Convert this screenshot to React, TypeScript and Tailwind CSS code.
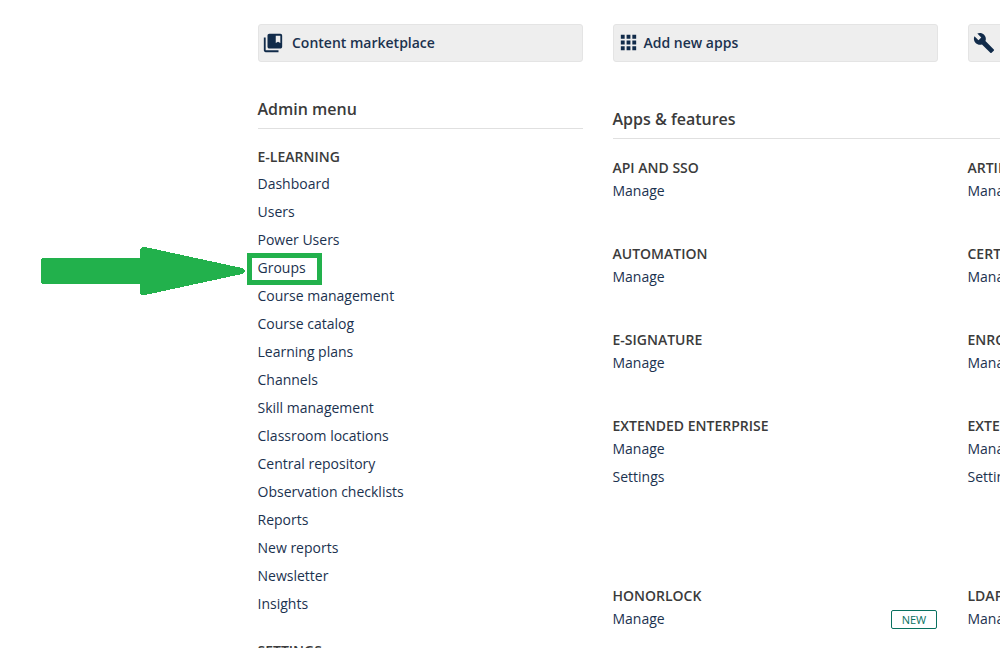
import { MdCollectionsBookmark, MdApps, MdBuild } from "react-icons/md";

const menu = ["Dashboard", "Users", "Power Users", "Groups", "Course management", "Course catalog", "Learning plans", "Channels", "Skill management", "Classroom locations", "Central repository", "Observation checklists", "Reports", "New reports", "Newsletter", "Insights"];

function Group({ title, items = ["Manage"], height = "h-[86px]", badge = false }: { title: string; items?: string[]; height?: string; badge?: boolean }) {
  return (
    <section className={`w-[325px] ${height}`}>
      <h3 className="h-[22px] font-semibold leading-[22px] text-[#3b3b3b]">{title}</h3>
      {items.map((item) => (
        <div key={item} className="flex h-7 items-center justify-between">
          <a className="-mt-1">{item}</a>
          {badge && <span className="-mt-[3px] mr-px flex h-[19px] w-[46px] items-center justify-center rounded-[2px] border border-[#08705f] pl-px pt-px text-[11px] text-[#08705f]">NEW</span>}
        </div>
      ))}
    </section>
  );
}

export default function App() {
  return (
    <div className="w-[1003px] bg-white">
      <div className="relative h-[648px] w-[1000px] overflow-hidden bg-white pl-[257.5px] pt-6 font-['Open_Sans',sans-serif] text-sm text-[#1b324f]">
        <div className="flex w-[1100px] gap-[30px] font-semibold">
          <div className="flex h-[38px] w-[325px] items-center gap-2 rounded-[3px] border border-[#e4e4e4] bg-[#eee] pl-[3.5px]"><MdCollectionsBookmark size={22} className="-mt-px text-[#112b4a]" />Content marketplace</div>
          <div className="flex h-[38px] w-[325px] items-center gap-[3.5px] rounded-[3px] border border-[#e4e4e4] bg-[#eee] pl-[3.5px]"><MdApps size={23} className="-mt-px text-[#112b4a]" />Add new apps</div>
          <div className="flex h-[38px] w-[325px] items-center rounded-[3px] border border-[#e4e4e4] bg-[#eee] pl-1"><MdBuild size={22} className="-mt-px text-[#112b4a]" /></div>
        </div>
        <div className="flex w-[1100px] gap-[30px]">
          <div className="w-[325px] shrink-0 pt-[33px]">
            <h2 className="h-[34px] border-b border-[#e0e0e0] text-base font-semibold leading-7 text-[#3b3b3b]">Admin menu</h2>
            <h3 className="mt-[17px] h-6 font-semibold leading-[22px] text-[#3b3b3b]">E-LEARNING</h3>
            <nav>{menu.map((item) => <a key={item} className="block h-7 leading-7">{item}</a>)}</nav>
            <h3 className="mt-[22px] font-semibold leading-[22px] text-[#3b3b3b]">SETTINGS</h3>
          </div>
          <div className="w-[680px] shrink-0 pt-[43px]">
            <h2 className="h-[34px] border-b border-[#e0e0e0] text-base font-semibold leading-7 text-[#3b3b3b]">Apps &amp; features</h2>
            <div className="grid grid-cols-2 gap-x-[30px] pt-[18px]">
              <Group title="API AND SSO" /><Group title="ARTIFICIAL INTELLIGENCE" />
              <Group title="AUTOMATION" /><Group title="CERTIFICATIONS" />
              <Group title="E-SIGNATURE" /><Group title="ENROLLMENT" />
              <Group title="EXTENDED ENTERPRISE" items={["Manage", "Settings"]} height="h-[170px]" /><Group title="EXTERNAL TRAINING" items={["Manage", "Settings"]} height="h-[170px]" />
              <Group title="HONORLOCK" badge /><Group title="LDAP" />
            </div>
          </div>
        </div>
        <svg className="absolute left-0 top-[240px]" width="330" height="65" shapeRendering="crispEdges">
          <path d="M42 18H140V9L142 7H145L242 28L245 30V32L242 34L145 55H141L140 54V44H42L41 43V19Z" fill="#22b14c" />
          <rect x="249.5" y="15.5" width="70" height="27" fill="none" stroke="#22b14c" strokeWidth="5" />
        </svg>
      </div>
    </div>
  );
}
